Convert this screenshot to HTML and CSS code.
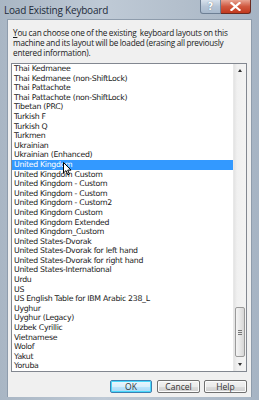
FILE: index.html
```html
<!DOCTYPE html>
<html lang="en">

<head>
    <meta charset="UTF-8">
    <title>Load Existing Keyboard</title>
    <link rel="stylesheet" href="styles.css">
</head>

<body>
    <div class="window">
        <div class="titlebar">
            <span class="title">Load Existing Keyboard</span>
            <div class="caption-btns">
                <div class="cap-btn help-cap">?</div>
                <div class="cap-btn close-cap">
                    <svg width="11" height="9" viewBox="0 0 11 9">
                        <path d="M1.5 1 L9.5 8 M9.5 1 L1.5 8" stroke="#fff" stroke-width="2.2" stroke-linecap="square"/>
                    </svg>
                </div>
            </div>
        </div>

        <div class="client">
            <p class="intro">You can choose one of the existing&nbsp; keyboard layouts on this machine and its layout will be loaded (erasing all previously entered information).</p>

            <div class="listbox">
                <ul class="items">
                    <li>Thai Kedmanee</li>
                    <li>Thai Kedmanee (non-ShiftLock)</li>
                    <li>Thai Pattachote</li>
                    <li>Thai Pattachote (non-ShiftLock)</li>
                    <li>Tibetan (PRC)</li>
                    <li>Turkish F</li>
                    <li>Turkish Q</li>
                    <li>Turkmen</li>
                    <li>Ukrainian</li>
                    <li>Ukrainian (Enhanced)</li>
                    <li class="selected">United Kingdom</li>
                    <li>United Kingdom Custom</li>
                    <li>United Kingdom - Custom</li>
                    <li>United Kingdom - Custom</li>
                    <li>United Kingdom - Custom2</li>
                    <li>United Kingdom Custom</li>
                    <li>United Kingdom Extended</li>
                    <li>United Kingdom_Custom</li>
                    <li>United States-Dvorak</li>
                    <li>United States-Dvorak for left hand</li>
                    <li>United States-Dvorak for right hand</li>
                    <li>United States-International</li>
                    <li>Urdu</li>
                    <li>US</li>
                    <li>US English Table for IBM Arabic 238_L</li>
                    <li>Uyghur</li>
                    <li>Uyghur (Legacy)</li>
                    <li>Uzbek Cyrillic</li>
                    <li>Vietnamese</li>
                    <li>Wolof</li>
                    <li>Yakut</li>
                    <li>Yoruba</li>
                </ul>

                <div class="scrollbar">
                    <div class="arrow up"></div>
                    <div class="track">
                        <div class="thumb">
                            <span class="grip"></span>
                            <span class="grip"></span>
                            <span class="grip"></span>
                        </div>
                    </div>
                    <div class="arrow down"></div>
                </div>

                <!-- mouse pointer resting on the selected row -->
                <svg class="pointer" width="9" height="14" viewBox="0 0 9 14">
                    <path d="M0.5 0.5 L0.5 11 L3 8.6 L4.8 12.8 L6.4 12.1 L4.7 8.1 L8 8.1 Z" fill="#fff" stroke="#000" stroke-width="1"/>
                </svg>
            </div>

            <div class="buttons">
                <button class="btn default">OK</button>
                <button class="btn">Cancel</button>
                <button class="btn">Help</button>
            </div>
        </div>
        <div class="frame-bottom"></div>
    </div>
</body>

</html>
```

FILE: styles.css
```css
body {
    margin: 0;
    background: #b4c2d0;
    font-family: "Open Sans", "DejaVu Sans", sans-serif;
    overflow: hidden;
}

.window {
    width: 259px;
    height: 400px;
    display: flex;
    flex-direction: column;
    background: linear-gradient(to right, #a9b6c4, #bfcad6 40%, #b3bfcc 70%, #a6b4c4);
    box-sizing: border-box;
}

/* Title bar */
.titlebar {
    height: 19px;
    flex-shrink: 0;
    display: flex;
    justify-content: space-between;
    align-items: flex-start;
    padding: 0 8px 0 4px;
}

.title {
    font-family: "Open Sans", sans-serif;
    font-size: 10px;
    line-height: 20px;
    color: #1e2b3a;
    letter-spacing: -0.2px;
}

.caption-btns {
    display: flex;
}

.cap-btn {
    height: 14px;
    box-sizing: border-box;
    display: flex;
    align-items: center;
    justify-content: center;
    border: 1px solid #6d7f94;
    border-top: none;
}

.help-cap {
    width: 21px;
    border-radius: 0 0 0 3px;
    background: linear-gradient(#d7e1ec, #b6c5d6 50%, #a9bacd);
    color: #fff;
    font-family: "DejaVu Sans", sans-serif;
    font-size: 10px;
    font-weight: bold;
    text-shadow: 0 0 1px #4d5e72;
}

.close-cap {
    width: 30px;
    border-left: none;
    border-color: #6b2a20;
    border-radius: 0 0 3px 0;
    background: linear-gradient(#e8a493, #d0583f 50%, #c2391e);
}

/* Client area */
.client {
    flex: 1;
    margin: 0 7px;
    background: #f0f0f0;
    display: flex;
    flex-direction: column;
    padding: 8px 4px 4px 3px;
    border: 1px solid #8e9cac;
    border-bottom: none;
    box-sizing: border-box;
}

.intro {
    margin: 0 0 5px 2px;
    font-family: "Open Sans", sans-serif;
    font-size: 8.2px;
    line-height: 10px;
    color: #1a1a1a;
    letter-spacing: -0.2px;
    word-spacing: -0.3px;
}

.intro::first-letter {
    text-decoration: underline;
}

.listbox {
    position: relative;
    height: 309px;
    flex-shrink: 0;
    display: flex;
    background: #fff;
    border: 1px solid #828790;
    box-sizing: border-box;
}

.items {
    list-style: none;
    margin: 0;
    padding: 0;
    flex: 1;
    overflow: hidden;
}

.items li {
    height: 9.6px;
    line-height: 9.6px;
    padding-left: 2px;
    font-family: "DejaVu Sans", sans-serif;
    font-size: 7.8px;
    letter-spacing: -0.3px;
    color: #222;
    white-space: nowrap;
}

.items li.selected {
    background: #3399ff;
    color: #fff;
}

.pointer {
    position: absolute;
    left: 51px;
    top: 98px;
}

/* Scrollbar */
.scrollbar {
    width: 12px;
    display: flex;
    flex-direction: column;
    background: linear-gradient(to right, #e3e3e3, #f0f0f0 25%, #f3f3f3);
    border-left: 1px solid #e8e8e8;
}

.arrow {
    height: 13px;
    display: flex;
    align-items: center;
    justify-content: center;
}

.arrow::before {
    content: "";
    border-left: 2.5px solid transparent;
    border-right: 2.5px solid transparent;
}

.arrow.up::before {
    border-bottom: 3px solid #333;
}

.arrow.down::before {
    border-top: 3px solid #333;
}

.track {
    flex: 1;
    display: flex;
    flex-direction: column;
    justify-content: flex-end;
}

.thumb {
    height: 50px;
    margin: 0 0 1px 1px;
    width: 10px;
    box-sizing: border-box;
    border: 1px solid #9a9a9a;
    border-radius: 2px;
    background: linear-gradient(to right, #f4f4f4, #e8e8e8 45%, #d6d6d6);
    display: flex;
    flex-direction: column;
    justify-content: center;
    align-items: center;
    gap: 1px;
}

.grip {
    width: 4px;
    height: 1px;
    background: #777;
}

/* Buttons */
.buttons {
    display: flex;
    justify-content: flex-end;
    gap: 4px;
    margin-top: 8px;
}

.btn {
    height: 13px;
    width: 43px;
    padding: 0;
    font-family: "Open Sans", sans-serif;
    font-size: 8.5px;
    line-height: 11px;
    color: #333;
    border: 1px solid #707070;
    border-radius: 2px;
    background: linear-gradient(#f2f2f2, #ebebeb 50%, #dddddd 51%, #cfcfcf);
    box-shadow: inset 0 0 0 1px #fcfcfc;
}

.btn.default {
    width: 42px;
    margin-right: 1px;
    border-color: #3c7fb1;
    box-shadow: inset 0 0 0 1px #48d8fb;
    background: linear-gradient(#eaf6fd, #d9f0fc 50%, #bee6fd 51%, #a7d9f5);
}

.frame-bottom {
    height: 5px;
    flex-shrink: 0;
    border-bottom: 2px solid #2c2c2c;
    box-sizing: border-box;
}
```
